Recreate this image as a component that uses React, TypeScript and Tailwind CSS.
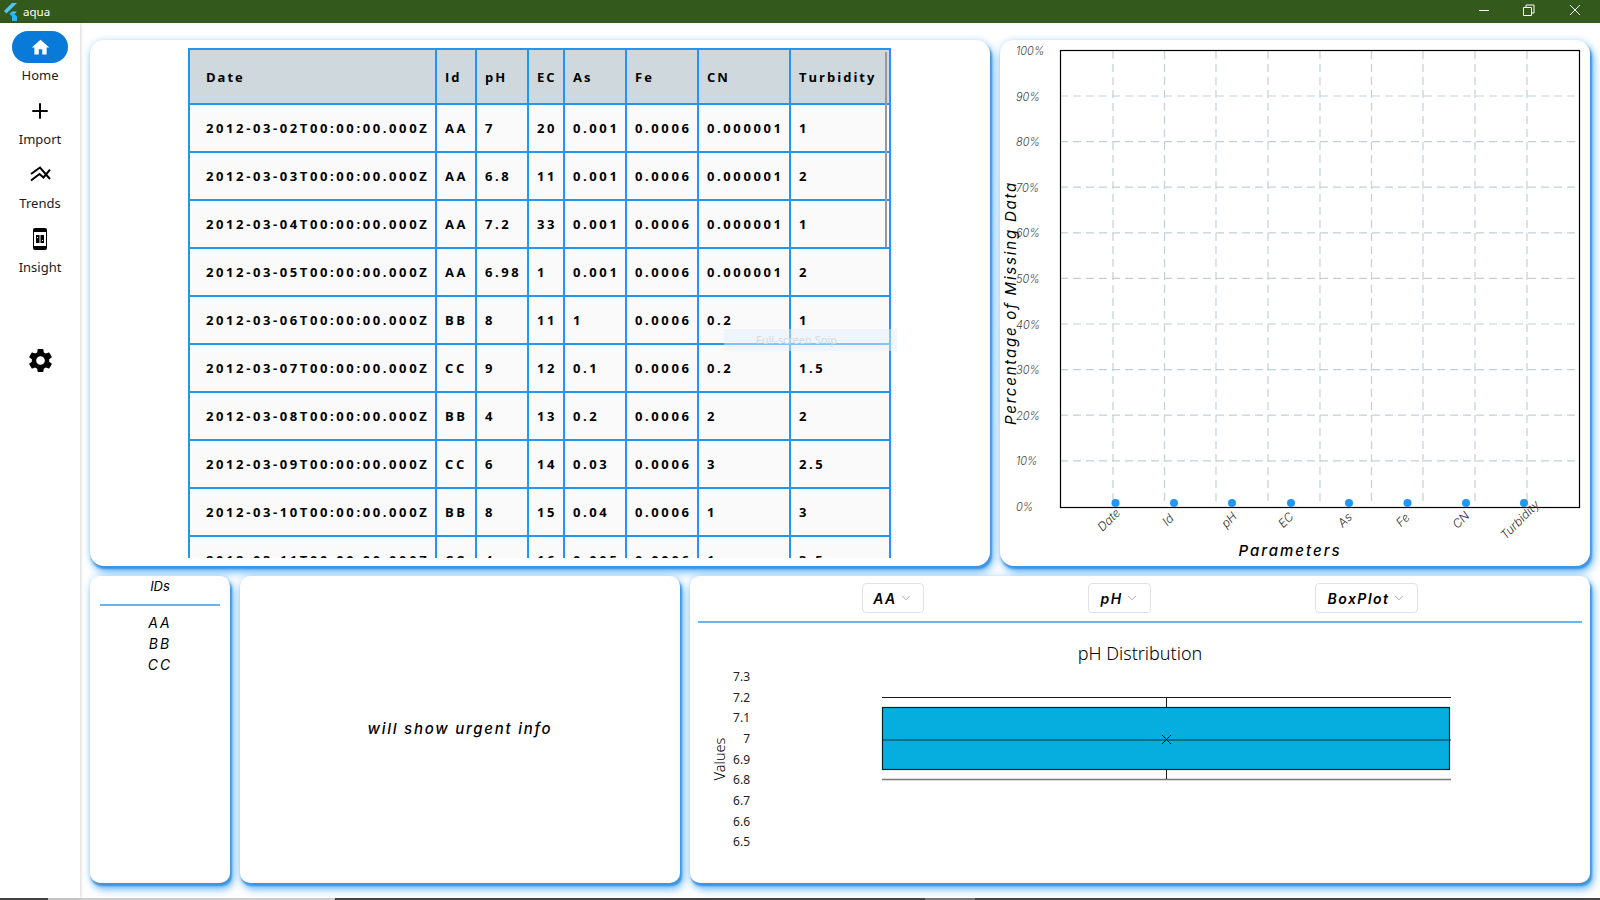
import { MdSettings } from 'react-icons/md';
import { ChevronDown, Plus } from 'lucide-react';

const columns = [
  { name: 'Date', width: 'w-[247px]', pad: 'pl-4' },
  { name: 'Id', width: 'w-[40px]', pad: 'pl-2' },
  { name: 'pH', width: 'w-[52px]', pad: 'pl-2' },
  { name: 'EC', width: 'w-[36px]', pad: 'pl-2' },
  { name: 'As', width: 'w-[62px]', pad: 'pl-2' },
  { name: 'Fe', width: 'w-[72px]', pad: 'pl-2' },
  { name: 'CN', width: 'w-[92px]', pad: 'pl-2' },
  { name: 'Turbidity', width: 'w-[100px]', pad: 'pl-2' },
];

const rows = [
  ['2012-03-02T00:00:00.000Z', 'AA', '7', '20', '0.001', '0.0006', '0.000001', '1'],
  ['2012-03-03T00:00:00.000Z', 'AA', '6.8', '11', '0.001', '0.0006', '0.000001', '2'],
  ['2012-03-04T00:00:00.000Z', 'AA', '7.2', '33', '0.001', '0.0006', '0.000001', '1'],
  ['2012-03-05T00:00:00.000Z', 'AA', '6.98', '1', '0.001', '0.0006', '0.000001', '2'],
  ['2012-03-06T00:00:00.000Z', 'BB', '8', '11', '1', '0.0006', '0.2', '1'],
  ['2012-03-07T00:00:00.000Z', 'CC', '9', '12', '0.1', '0.0006', '0.2', '1.5'],
  ['2012-03-08T00:00:00.000Z', 'BB', '4', '13', '0.2', '0.0006', '2', '2'],
  ['2012-03-09T00:00:00.000Z', 'CC', '6', '14', '0.03', '0.0006', '3', '2.5'],
  ['2012-03-10T00:00:00.000Z', 'BB', '8', '15', '0.04', '0.0006', '1', '3'],
  ['2012-03-11T00:00:00.000Z', 'CC', '4', '16', '0.005', '0.0006', '1', '3.5'],
];

const cardShadow =
  'shadow-[1.5px_3px_2px_rgba(50,140,225,0.85),3px_6px_9px_rgba(33,150,243,0.7),0_0_7px_rgba(33,150,243,0.25)]';

const yLabels = ['100%', '90%', '80%', '70%', '60%', '50%', '40%', '30%', '20%', '10%', '0%'];

const xLabels = [
  { name: 'Date', cx: 109, dot: 115.5 },
  { name: 'Id', cx: 168, dot: 174 },
  { name: 'pH', cx: 229, dot: 232 },
  { name: 'EC', cx: 286, dot: 291 },
  { name: 'As', cx: 345, dot: 349 },
  { name: 'Fe', cx: 403, dot: 407.5 },
  { name: 'CN', cx: 461, dot: 466 },
  { name: 'Turbidity', cx: 520, dot: 524 },
];

const gridX = [113, 164.5, 216, 268, 320, 371.5, 423, 475, 527];

const boxTicks = ['7.3', '7.2', '7.1', '7', '6.9', '6.8', '6.7', '6.6', '6.5'];

function FlutterLogo() {
  return (
    <svg width="15" height="18" viewBox="0 0 14 18" className="shrink-0">
      <polygon points="8.5,0 13.5,0 3,10.5 0.5,8" fill="#54c5f8" />
      <polygon points="8.5,8.5 13.5,8.5 8.5,13.5 6,11" fill="#54c5f8" />
      <polygon points="6,11 8.5,8.5 13.5,13.5 13.5,18 8.5,18 8.5,13.5" fill="#29b6f6" />
      <polygon points="6,11 8.5,13.5 8.5,18" fill="#01579b" />
    </svg>
  );
}

function TitleBar() {
  return (
    <div className="flex h-[23px] shrink-0 items-center bg-[#33591c] pl-[3px] text-white">
      <FlutterLogo />
      <span className="ml-[5px] font-['Noto_Sans',sans-serif] text-[11.5px]">aqua</span>
      <svg width="130" height="23" viewBox="0 0 130 23" className="ml-auto shrink-0" fill="none" stroke="#ffffff" strokeWidth="1">
        <path d="M9 10.5h10" />
        <path d="M53.5 7.5h8v8h-8zM56 7.5v-2.5h8v8h-2.5" />
        <path d="M100 5l10 10M110 5l-10 10" />
      </svg>
    </div>
  );
}

function NavItem({ label, active, children }: { label: string; active?: boolean; children: React.ReactNode }) {
  return (
    <div className="flex h-[64px] flex-col items-center">
      <div className={`flex h-[32px] w-[56px] items-center justify-center rounded-full ${active ? 'bg-[#0a7ad8]' : ''}`}>
        {children}
      </div>
      <span className="mt-[2px] h-[20px] font-['Noto_Sans',sans-serif] text-[13px] leading-[20px] text-[#1c1c1c]">
        {label}
      </span>
    </div>
  );
}

function Sidebar() {
  return (
    <div className="z-10 flex w-[80px] shrink-0 flex-col items-center bg-white pt-[8px] shadow-[1px_0_3px_rgba(0,0,0,0.16)]">
      <NavItem label="Home" active>
        <svg width="21" height="21" viewBox="0 0 24 24" fill="#ffffff">
          <path d="M10 20v-6h4v6h5v-8h3L12 3 2 12h3v8z" />
        </svg>
      </NavItem>
      <NavItem label="Import">
        <Plus size={24} strokeWidth={2} color="#000000" />
      </NavItem>
      <NavItem label="Trends">
        <svg width="24" height="24" viewBox="0 0 24 24" fill="none" stroke="#000000" strokeWidth="2">
          <path d="M3 11l9-6.5 10 11.5" />
          <path d="M3 17.5l8.5-6.5 4 3.5 6.5-7.8" />
        </svg>
      </NavItem>
      <NavItem label="Insight">
        <svg width="16" height="24" viewBox="0 0 16 24">
          <rect x="1" y="1" width="14" height="22" rx="2" fill="#000000" />
          <rect x="2" y="5" width="12" height="14" fill="#ffffff" />
          <rect x="4" y="8" width="8" height="8" fill="#000000" />
          <rect x="7.5" y="8" width="1" height="8" fill="#ffffff" />
          <rect x="5" y="10" width="1" height="1" fill="#ffffff" />
          <rect x="10" y="13" width="1" height="1" fill="#ffffff" />
        </svg>
      </NavItem>
      <div className="mt-[59px] flex h-[28px] items-center justify-center">
        <MdSettings size={29} color="#000000" />
      </div>
    </div>
  );
}

function DataTable() {
  return (
    <div className="relative h-[510px] w-[704px] overflow-hidden">
      <table className="ml-[1px] w-[701px] table-fixed border-collapse font-['Open_Sans',sans-serif] text-[13px] font-bold text-black">
        <thead>
          <tr className="h-[55px] bg-[#cfd8dc] tracking-[2px]">
            {columns.map((col) => (
              <th key={col.name} className={`${col.width} ${col.pad} border-2 border-[#2196f3] pt-[3px] text-left font-bold`}>
                {col.name}
              </th>
            ))}
          </tr>
        </thead>
        <tbody>
          {rows.map((row) => (
            <tr key={row[0]} className="h-[48px] bg-[#fafafa] tracking-[2.6px]">
              {row.map((cell, i) => (
                <td key={i} className={`${columns[i].pad} overflow-hidden border-2 border-[#2196f3] pt-[2px] whitespace-nowrap`}>
                  {cell}
                </td>
              ))}
            </tr>
          ))}
        </tbody>
      </table>
      {/* table scrollbar */}
      <div className="absolute top-[4px] right-[4px] h-[195px] w-[2px] bg-[#999999]" />
    </div>
  );
}

function MissingChart() {
  return (
    <svg width="590" height="526" viewBox="0 0 590 526" className="block font-['Inter',sans-serif]">
      {yLabels.slice(1, -1).map((label, i) => (
        <line
          key={label}
          x1="60"
          x2="580"
          y1={56 + i * 45.6}
          y2={56 + i * 45.6}
          stroke="#c3d0d6"
          strokeWidth="1.2"
          strokeDasharray="8 5"
        />
      ))}
      {gridX.map((x) => (
        <line key={x} x1={x} x2={x} y1="11" y2="463" stroke="#c3d0d6" strokeWidth="1.2" strokeDasharray="8 5" />
      ))}
      <rect x="60.5" y="10.5" width="519" height="457" fill="none" stroke="#000000" strokeWidth="1.2" />
      {yLabels.map((label, i) => (
        <text key={label} x="16" y={15 + i * 45.6} fontSize="11" fontStyle="italic" fontWeight="300" fill="#444444">
          {label}
        </text>
      ))}
      {xLabels.map((l) => (
        <g key={l.name}>
          <circle cx={l.dot} cy="463" r="4" fill="#2196f3" />
          <text
            x={l.cx}
            y="484"
            textAnchor="middle"
            fontSize="12"
            fontStyle="italic"
            fontWeight="300"
            fill="#333333"
            transform={`rotate(-45 ${l.cx} 480)`}
          >
            {l.name}
          </text>
        </g>
      ))}
      <text x="290" y="516" textAnchor="middle" fontSize="15" fontStyle="italic" fontWeight="500" letterSpacing="2" fill="#000000">
        Parameters
      </text>
      <text
        x="11"
        y="263"
        textAnchor="middle"
        fontSize="15"
        fontStyle="italic"
        letterSpacing="1.8"
        fill="#000000"
        transform="rotate(-90 11 263) translate(0 5)"
      >
        Percentage of Missing Data
      </text>
    </svg>
  );
}

function BoxPlot() {
  return (
    <svg width="900" height="260" viewBox="0 0 900 260" className="block font-['Noto_Sans',sans-serif]">
      <text x="450" y="37" textAnchor="middle" fontSize="18" fontWeight="300" fill="#000000">
        pH Distribution
      </text>
      {boxTicks.map((t, i) => (
        <text key={t} x="60" y={58 + i * 20.65} textAnchor="end" fontSize="12" fill="#222222">
          {t}
        </text>
      ))}
      <text x="0" y="0" textAnchor="middle" fontSize="14.5" fontWeight="300" fill="#000000" transform="translate(35 136) rotate(-90)">
        Values
      </text>
      <rect x="192.5" y="84.5" width="567" height="62" fill="#06aedf" stroke="#04222e" strokeWidth="1.2" />
      <line x1="192" x2="761" y1="117" y2="117" stroke="#04303f" strokeWidth="1.2" />
      <line x1="192" x2="761" y1="74.5" y2="74.5" stroke="#1a1a1a" strokeWidth="1.2" />
      <line x1="192" x2="761" y1="156.5" y2="156.5" stroke="#777777" strokeWidth="1.5" />
      <line x1="476.5" x2="476.5" y1="75" y2="84" stroke="#1a1a1a" />
      <line x1="476.5" x2="476.5" y1="147" y2="156" stroke="#1a1a1a" />
      <path d="M472 112l9 9M481 112l-9 9" stroke="#000000" strokeWidth="1" fill="none" />
    </svg>
  );
}

function Dropdown({ label, width }: { label: string; width: string }) {
  return (
    <div className={`flex h-[30px] items-center justify-center rounded-[4px] border-[1.5px] border-[#e2e2e2] font-['Inter',sans-serif] text-[14px] font-semibold tracking-[1.5px] text-black italic ${width}`}>
      {label}
      <ChevronDown size={14} color="#888888" strokeWidth={1.2} className="ml-[2px]" />
    </div>
  );
}

export default function App() {
  return (
    <div className="relative flex h-[900px] w-[1600px] flex-col overflow-hidden bg-white">
      <TitleBar />
      <div className="flex min-h-0 flex-1">
        <Sidebar />
        <div className="flex flex-1 flex-col gap-[10px] px-[10px] pt-[17px]">
          <div className="flex h-[526px] gap-[10px]">
            <div className={`w-[900px] rounded-[14px] bg-white pt-[8px] pl-[97px] ${cardShadow}`}>
              <DataTable />
            </div>
            <div className={`w-[590px] rounded-[14px] bg-white ${cardShadow}`}>
              <MissingChart />
            </div>
          </div>
          <div className="flex h-[307px] gap-[10px]">
            <div className={`flex w-[140px] flex-col items-center rounded-[10px] bg-white px-[10px] font-['Inter',sans-serif] text-black italic ${cardShadow}`}>
              <span className="h-[20px] text-[13px] leading-[20px]">IDs</span>
              <div className="mt-[8px] h-[1.5px] w-full bg-[#64b5f6]" />
              <div className="mt-[6.5px] flex flex-col items-center text-[14px] leading-[21px] tracking-[2px]">
                <span>AA</span>
                <span>BB</span>
                <span>CC</span>
              </div>
            </div>
            <div className={`flex w-[440px] items-center justify-center rounded-[10px] bg-white font-['Inter',sans-serif] text-[15px] font-medium tracking-[1.75px] text-black italic ${cardShadow}`}>
              will show urgent info
            </div>
            <div className={`w-[900px] rounded-[10px] bg-white pt-[7px] ${cardShadow}`}>
              <div className="flex justify-evenly px-[8px]">
                <Dropdown label="AA" width="w-[62px]" />
                <Dropdown label="pH" width="w-[63px]" />
                <Dropdown label="BoxPlot" width="w-[103px]" />
              </div>
              <div className="mx-[8px] mt-[8px] h-[2px] bg-[#64b5f6]" />
              <BoxPlot />
            </div>
          </div>
        </div>
      </div>
      {/* bottom strip of the screen */}
      <div className="flex h-[2px] shrink-0 bg-[#444444]">
        <div className="w-[48px]" />
        <div className="w-[287px] bg-[#cccccc]" />
        <div className="w-[590px]" />
        <div className="w-[50px] bg-[#777777]" />
      </div>
      {/* snip tool tooltip caught in the screenshot */}
      <div className="absolute top-[329px] left-[724px] flex h-[22px] w-[173px] items-center bg-[#e3f0fb]/50 pl-[32px] font-['Noto_Sans',sans-serif] text-[11px] text-[#d5dadd]">
        Full-screen Snip
      </div>
    </div>
  );
}
